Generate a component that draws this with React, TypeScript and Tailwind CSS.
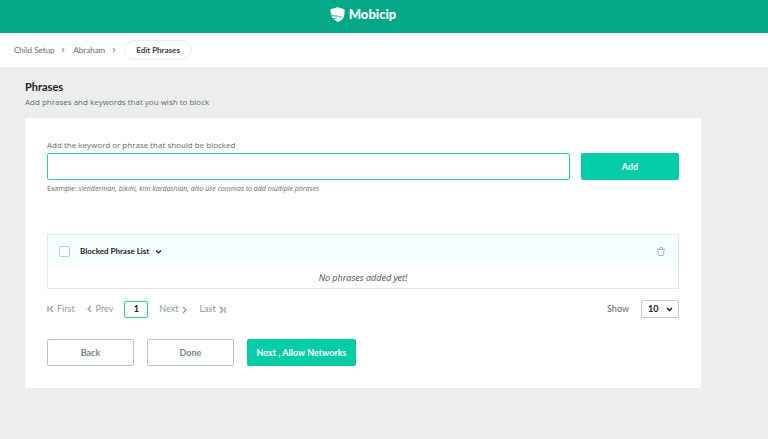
import { useState } from "react";
import type { ReactNode } from "react";

const pageSizes = [10, 25, 50];

function Logo() {
  return (
    <a href="#" className="flex items-center gap-1 text-white">
      <svg viewBox="0 0 15 15" className="h-[15px] w-[15px]" aria-hidden="true">
        <path
          d="M.4 3.200Q.3 2.300 1.300 2L6.600.4q1-.3 2 0l5 1.600q1 .3 1 1.200c.1 3.300-.3 6.100-1.700 8.200-1.100 1.700-2.600 2.800-4.200 3.300-1.100.2-2.600-.5-4-1.800C1.800 10.400.5 7.200.4 3.200Z"
          fill="currentColor"
        />
        <path
          d="M.3 7.200c2 1.500 4 2.100 6.200 1.700 1.200-.2 1.700.5 2.500 1.300l1.500-.8 1.500 1.100M3.600 11.600c1.300.1 2.500-.2 3.400-.9"
          fill="none"
          stroke="#04a887"
          strokeWidth="0.9"
        />
      </svg>
      <span className="font-['Lato',sans-serif] text-[13px] leading-4 font-black">Mobicip</span>
    </a>
  );
}

function Chevron({ className, d = "M2 1l3 3-3 3" }: { className?: string; d?: string }) {
  return (
    <svg viewBox="0 0 7 8" className={className} fill="none" stroke="currentColor" strokeWidth="1.2" aria-hidden="true">
      <path d={d} />
    </svg>
  );
}

function PageButton({ children }: { children: ReactNode }) {
  return (
    <button type="button" className="flex items-center gap-[3px] text-[#8b9c9b]">
      {children}
    </button>
  );
}

export default function App() {
  const [phrase, setPhrase] = useState("");
  const [pageSize, setPageSize] = useState(10);

  return (
    <div className="min-h-screen bg-[#eceeee] font-['Lato',sans-serif] text-[9px] leading-3 text-[#616b6b]">
      <header className="flex h-[33px] items-start justify-center bg-[#04a887] pt-1.5 pr-[42px]">
        <Logo />
      </header>

      <nav aria-label="Breadcrumb" className="flex h-[34px] items-center bg-white px-3.5 text-[8px]">
        <a href="#">Child Setup</a>
        <Chevron className="mx-1.5 h-2 w-[7px] text-[#a3abaa]" d="M2 2l2 2-2 2" />
        <a href="#">Abraham</a>
        <Chevron className="mx-1.5 h-2 w-[7px] text-[#a3abaa]" d="M2 2l2 2-2 2" />
        <span aria-current="page" className="flex h-5 items-center rounded-full border border-[#e9ecec] px-[11px] font-bold text-[#33403f]">
          Edit Phrases
        </span>
      </nav>

      <main className="mr-[67px] ml-[25px] pt-3">
        <h1 className="text-[11px] leading-4 font-bold text-[#1d2222]">Phrases</h1>
        <p className="mt-px font-['Open_Sans',sans-serif] text-[8px]">Add phrases and keywords that you wish to block</p>

        <section className="mt-2.5 bg-white px-[22px] pt-[21px] pb-[22px]">
          <form onSubmit={(event) => event.preventDefault()}>
            <label htmlFor="phrase" className="block font-['Open_Sans',sans-serif] text-[8px]">
              Add the keyword or phrase that should be blocked
            </label>
            <div className="mt-0.5 flex gap-[11px]">
              <input
                id="phrase"
                type="text"
                value={phrase}
                onChange={(event) => setPhrase(event.target.value)}
                aria-describedby="phrase-example"
                className="h-[27px] min-w-0 flex-1 rounded-xs border border-[#2cc9aa] bg-white px-2 outline-none"
              />
              <button type="submit" className="h-[27px] w-[98px] rounded-xs bg-[#02cda7] font-bold text-white">
                Add
              </button>
            </div>
            <p id="phrase-example" className="mt-[3px] font-['Open_Sans',sans-serif] text-[7px]">
              Example: <em>slenderman, bikini, kim kardashian, also use commas to add multiple phrases</em>
            </p>
          </form>

          <div className="mt-[39px] border border-[#dfeaea]">
            <div className="flex h-8 items-center bg-[#f5ffff] px-[11px]">
              <input
                type="checkbox"
                aria-label="Select all phrases"
                className="h-[11px] w-[11px] appearance-none rounded-xs border border-[#c3cbcb] bg-white checked:bg-[#02cda7]"
              />
              <button type="button" className="ml-2.5 flex items-center gap-1.5 text-[8px] font-bold text-[#1d2222]">
                Blocked Phrase List
                <Chevron className="mt-0.5 h-2 w-[7px]" d="M1 2.500l2.500 2.500 2.500-2.500" />
              </button>
              <button type="button" aria-label="Delete selected phrases" className="ml-auto pr-0.5 text-[#92a5a3]">
                <svg viewBox="0 0 8 9" className="h-[9px] w-2" fill="none" stroke="currentColor" strokeWidth="0.8" aria-hidden="true">
                  <path d="M0 2.300h8M1 2.300l.3 5.500q.1.700.8.700h3.800q.7 0 .8-.7L7 2.300M2.500 2.300V1.200q0-.7.7-.7h1.600q.7 0 .7.700v1.100" />
                </svg>
              </button>
            </div>
            <p className="flex h-[21px] items-center justify-center font-['Open_Sans',sans-serif] text-[9px] text-[#485150] italic">
              No phrases added yet!
            </p>
          </div>

          <div className="mt-[11px] flex items-center justify-between">
            <nav aria-label="Pagination" className="flex items-center gap-[11px]">
              <PageButton>
                <Chevron className="h-2 w-[7px]" d="M1 1v6M6 1L3 4l3 3" />
                First
              </PageButton>
              <PageButton>
                <Chevron className="h-2 w-[7px]" d="M5 1L2 4l3 3" />
                Prev
              </PageButton>
              <button type="button" aria-current="page" className="h-[17px] w-6 rounded-xs border border-[#2cc9aa] font-bold text-[#1d2222]">
                1
              </button>
              <PageButton>
                Next
                <Chevron className="mt-0.5 h-2 w-[7px]" />
              </PageButton>
              <PageButton>
                Last
                <Chevron className="mt-0.5 h-2 w-[7px]" d="M1 1l3 3-3 3M6 1v6" />
              </PageButton>
            </nav>
            <div className="flex items-center gap-3">
              <label htmlFor="page-size">Show</label>
              <div className="relative">
                <select
                  id="page-size"
                  value={pageSize}
                  onChange={(event) => setPageSize(Number(event.target.value))}
                  className="block h-[18px] w-[38px] appearance-none rounded-xs border border-[#c3cbcb] bg-white pl-1.5 font-bold text-[#1d2222]"
                >
                  {pageSizes.map((size) => (
                    <option key={size}>{size}</option>
                  ))}
                </select>
                <svg viewBox="0 0 7 5" className="pointer-events-none absolute top-[7px] right-1.5 h-[5px] w-[7px] text-[#1d2222]" fill="none" stroke="currentColor" strokeWidth="1.500" aria-hidden="true">
                  <path d="M1 1l2.500 2.500L6 1" />
                </svg>
              </div>
            </div>
          </div>

          <div className="mt-[21px] flex gap-[13px] font-bold">
            <button type="button" className="h-[27px] w-[87px] rounded-xs border border-[#b5c6c3] text-[#738b87]">
              Back
            </button>
            <button type="button" className="h-[27px] w-[87px] rounded-xs border border-[#b5c6c3] text-[#738b87]">
              Done
            </button>
            <button type="button" className="h-[27px] w-[109px] rounded-xs bg-[#02cda7] text-white">
              Next , Allow Networks
            </button>
          </div>
        </section>
      </main>
    </div>
  );
}
